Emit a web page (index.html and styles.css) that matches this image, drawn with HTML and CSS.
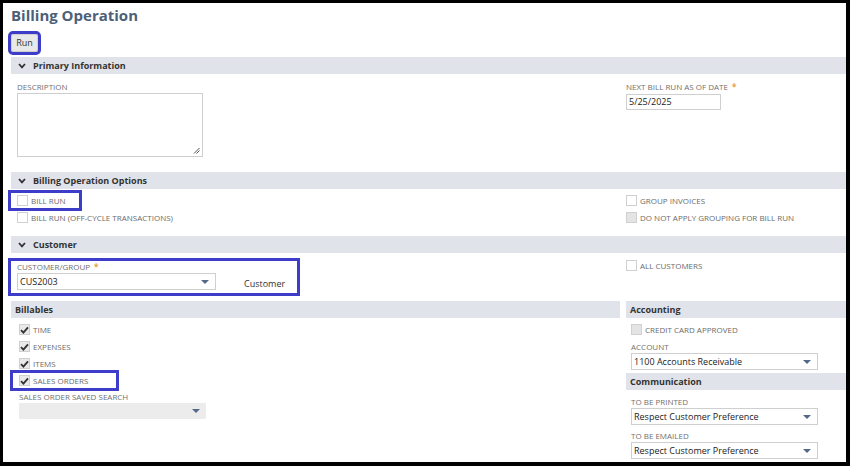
FILE: index.html
```html
<html>
<head>
  <title>Billing Operation</title>
  <link rel="stylesheet" href="styles.css">
</head>
<body>
<div class="page">
  <h1 class="title">Billing Operation</h1>
  <div class="toolbar"><span class="button mark">Run</span></div>

  <!-- Primary Information -->
  <div class="section_head">
    <svg class="chev" width="8" height="6" viewBox="0 0 8 6"><path d="M1 1 L4 4.3 L7 1" fill="none" stroke="#333" stroke-width="1.8"/></svg>
    Primary Information
  </div>
  <div class="cols primary">
    <div>
      <div class="label">DESCRIPTION</div>
      <div class="textarea">
        <svg class="grip" width="7" height="7" viewBox="0 0 7 7"><path d="M1 6.5 L6.5 1 M3.5 6.5 L6.5 3.5" stroke="#555" stroke-width="1"/></svg>
      </div>
    </div>
    <div>
      <div class="label">NEXT BILL RUN AS OF DATE <span class="req">*</span></div>
      <div class="input date">5/25/2025</div>
    </div>
  </div>

  <!-- Billing Operation Options -->
  <div class="section_head">
    <svg class="chev" width="8" height="6" viewBox="0 0 8 6"><path d="M1 1 L4 4.3 L7 1" fill="none" stroke="#333" stroke-width="1.8"/></svg>
    Billing Operation Options
  </div>
  <div class="cols options">
    <div>
      <div class="check_row"><span class="mark mark_row"><span class="box"></span>BILL RUN</span></div>
      <div class="check_row"><span class="box"></span>BILL RUN (OFF-CYCLE TRANSACTIONS)</div>
    </div>
    <div>
      <div class="check_row"><span class="box"></span>GROUP INVOICES</div>
      <div class="check_row"><span class="box disabled"></span>DO NOT APPLY GROUPING FOR BILL RUN</div>
    </div>
  </div>

  <!-- Customer -->
  <div class="section_head">
    <svg class="chev" width="8" height="6" viewBox="0 0 8 6"><path d="M1 1 L4 4.3 L7 1" fill="none" stroke="#333" stroke-width="1.8"/></svg>
    Customer
  </div>
  <div class="cols customer">
    <div>
      <div class="mark mark_customer">
        <div class="label">CUSTOMER/GROUP <span class="req">*</span></div>
        <div class="customer_line">
          <div class="select cust_select">CUS2003<span class="arrow"></span></div>
          <span class="type">Customer</span>
        </div>
      </div>
    </div>
    <div>
      <div class="check_row"><span class="box"></span>ALL CUSTOMERS</div>
    </div>
  </div>

  <div class="sub_cols">
    <div class="billables">
      <div class="sub_head">Billables</div>
      <div class="sub_body">
        <div class="check_row"><span class="box checked"><svg width="9" height="8" viewBox="0 0 9 8"><path d="M1 4.2 L3.4 6.6 L8 1.4" fill="none" stroke="#333" stroke-width="1.9"/></svg></span>TIME</div>
        <div class="check_row"><span class="box checked"><svg width="9" height="8" viewBox="0 0 9 8"><path d="M1 4.2 L3.4 6.6 L8 1.4" fill="none" stroke="#333" stroke-width="1.9"/></svg></span>EXPENSES</div>
        <div class="check_row"><span class="box checked"><svg width="9" height="8" viewBox="0 0 9 8"><path d="M1 4.2 L3.4 6.6 L8 1.4" fill="none" stroke="#333" stroke-width="1.9"/></svg></span>ITEMS</div>
        <div class="check_row"><span class="mark mark_sales"><span class="box checked"><svg width="9" height="8" viewBox="0 0 9 8"><path d="M1 4.2 L3.4 6.6 L8 1.4" fill="none" stroke="#333" stroke-width="1.9"/></svg></span>SALES ORDERS</span></div>
        <div class="label label_search">SALES ORDER SAVED SEARCH</div>
        <div class="select search_select"><span class="arrow"></span></div>
      </div>
    </div>
    <div class="side">
      <div class="sub_head">Accounting</div>
      <div class="side_body">
        <div class="check_row"><span class="box disabled"></span>CREDIT CARD APPROVED</div>
        <div class="label label_account">ACCOUNT</div>
        <div class="select side_select">1100 Accounts Receivable<span class="arrow"></span></div>
      </div>
      <div class="sub_head comm_head">Communication</div>
      <div class="side_body">
        <div class="label label_print">TO BE PRINTED</div>
        <div class="select side_select">Respect Customer Preference<span class="arrow"></span></div>
        <div class="label label_email">TO BE EMAILED</div>
        <div class="select side_select">Respect Customer Preference<span class="arrow"></span></div>
      </div>
    </div>
  </div>
</div>
</body>
</html>
```

FILE: styles.css
```css
body {
    margin: 0;
    background: #000;
    font-family: "Open Sans", "Liberation Sans", sans-serif;
}

.page {
    margin: 3px 4px 4px 3px;
    height: 459px;
    overflow: hidden;
    background: #fff;
    padding: 2px 0 0 8px;
    box-sizing: border-box;
}

.title {
    margin: 0;
    font-size: 15px;
    line-height: 20px;
    font-weight: bold;
    color: #4d5f79;
}

.toolbar {
    margin-top: 9px;
    height: 18px;
}

.button {
    display: inline-block;
    width: 27px;
    height: 18px;
    box-sizing: border-box;
    border: 1px solid #cfcfcf;
    border-radius: 2px;
    background: #e8e8e8;
    font-size: 9px;
    line-height: 16px;
    text-align: center;
    color: #333;
}

.mark {
    outline: 3px solid #3d3dc9;
}

.section_head {
    margin-top: 5px;
    height: 17px;
    line-height: 17px;
    background: #e0e4ea;
    font-size: 9px;
    font-weight: bold;
    color: #333;
    display: flex;
    align-items: center;
}

.chev {
    margin: 0 7px 0 7px;
}

.cols {
    display: grid;
    grid-template-columns: 609px 1fr;
    padding-left: 6px;
}

.label {
    font-size: 8px;
    line-height: 12px;
    color: #707070;
    white-space: nowrap;
}

.req {
    color: #e6a23a;
    font-size: 8px;
    font-weight: bold;
    margin-left: 2px;
}

.primary {
    margin-top: 7px;
    height: 86px;
}

.textarea {
    position: relative;
    width: 186px;
    height: 64px;
    box-sizing: border-box;
    border: 1px solid #cfcfcf;
}

.grip {
    position: absolute;
    right: 2px;
    bottom: 2px;
}

.input {
    box-sizing: border-box;
    border: 1px solid #cfcfcf;
    font-size: 9px;
    color: #222;
    padding-left: 2px;
}

.date {
    margin-top: 1px;
    width: 95px;
    height: 16px;
    line-height: 14px;
}

.section_head + .options {
    margin-top: 3px;
}

.options {
    height: 34px;
    margin-bottom: 10px;
}

.check_row {
    height: 17px;
    display: flex;
    align-items: center;
    font-size: 8px;
    color: #6b6b6b;
    white-space: nowrap;
}

.box {
    display: inline-flex;
    align-items: center;
    justify-content: center;
    width: 11px;
    height: 11px;
    box-sizing: border-box;
    border: 1px solid #d0d0d0;
    background: #fff;
    margin-right: 3px;
}

.box.disabled {
    background: #e4e4e4;
}

.box.checked {
    background: #e9e9e9;
}

.mark_row {
    display: inline-flex;
    align-items: center;
    padding: 2px 13px 2px 6px;
    margin-left: -6px;
}

.customer {
    margin-top: 4px;
    height: 44px;
}

.mark_customer {
    margin: 4px 0 0 -6px;
    padding: 0 0 3px 6px;
    width: 280px;
}

.customer_line {
    display: flex;
    align-items: flex-end;
}

.select {
    position: relative;
    box-sizing: border-box;
    border: 1px solid #cfcfcf;
    font-size: 9px;
    color: #222;
    padding-left: 2px;
    background: #fff;
}

.arrow {
    position: absolute;
    right: 6px;
    top: 50%;
    margin-top: -2px;
    border-left: 4px solid transparent;
    border-right: 4px solid transparent;
    border-top: 4px solid #52698a;
}

.cust_select {
    width: 199px;
    height: 17px;
    line-height: 15px;
}

.type {
    margin-left: 28px;
    font-size: 9px;
    color: #333;
    line-height: 12px;
}

.sub_cols {
    display: grid;
    grid-template-columns: 609px 1fr;
    gap: 6px;
    margin-top: 0;
}

.sub_head {
    height: 17px;
    line-height: 17px;
    background: #e0e4ea;
    font-size: 9px;
    font-weight: bold;
    color: #333;
    padding-left: 4px;
}

.sub_body {
    padding: 3px 0 0 8px;
}

.mark_sales {
    display: inline-flex;
    align-items: center;
    padding: 2px 28px 2px 6px;
    margin-left: -6px;
}

.label_search {
    margin-top: 2px;
}

.search_select {
    width: 187px;
    height: 16px;
    border: none;
    background: #ececec;
}

.side_body {
    padding: 3px 0 0 5px;
}

.label_account {
    margin-top: 3px;
}

.side_select {
    width: 187px;
    height: 17px;
    line-height: 15px;
}

.comm_head {
    margin-top: 3px;
}

.label_print {
    margin-top: 3px;
}

.label_email {
    margin-top: 5px;
}
```
